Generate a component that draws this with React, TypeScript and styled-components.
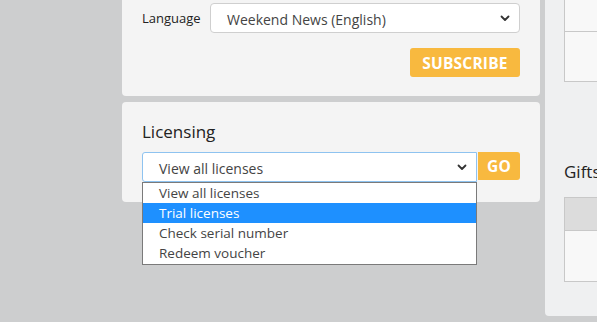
import React from "react";
import styled, { createGlobalStyle } from "styled-components";

const GlobalStyle = createGlobalStyle`
  html, body {
    margin: 0;
    padding: 0;
    overflow: hidden;
    background: #cdcecf;
    font-family: "Open Sans", "Noto Sans", sans-serif;
    color: #333;
  }
`;

const languageOptions = ["Weekend News (English)"];
const licensingOptions = [
  "View all licenses",
  "Trial licenses",
  "Check serial number",
  "Redeem voucher",
];

function Chevron() {
  return (
    <svg width="10" height="7" viewBox="0 0 10 7">
      <path
        d="M1.5 1.5 L5 5 L8.5 1.5"
        fill="none"
        stroke="#333"
        strokeWidth="1.8"
        strokeLinecap="round"
        strokeLinejoin="round"
      />
    </svg>
  );
}

export default function App() {
  return (
    <>
      <GlobalStyle />
      <StyledPage>
        <StyledLeftColumn>
          <StyledCard $top>
            <StyledLanguageRow>
              <StyledLabel>Language</StyledLabel>
              <StyledSelect $width={310}>
                <span>{languageOptions[0]}</span>
                <Chevron />
              </StyledSelect>
            </StyledLanguageRow>
            <StyledActions>
              <StyledButton $width={110}>SUBSCRIBE</StyledButton>
            </StyledActions>
          </StyledCard>
          <StyledCard>
            <StyledHeading>Licensing</StyledHeading>
            <StyledLicenseRow>
              <StyledSelectWrap>
                <StyledSelect $width={335} $focused>
                  <span>{licensingOptions[0]}</span>
                  <Chevron />
                </StyledSelect>
                <StyledMenu>
                  {licensingOptions.map((o, i) => (
                    <StyledOption key={o} $active={i === 1}>
                      {o}
                    </StyledOption>
                  ))}
                </StyledMenu>
              </StyledSelectWrap>
              <StyledButton $width={42} $short>
                GO
              </StyledButton>
            </StyledLicenseRow>
          </StyledCard>
        </StyledLeftColumn>
        <StyledRightPanel>
          <StyledTable>
            <StyledRow $height={50} />
            <StyledRow $height={49} />
          </StyledTable>
          <StyledGiftsHeading>Gifts</StyledGiftsHeading>
          <StyledTable>
            <StyledRow $height={32} $header />
            <StyledRow $height={50} />
          </StyledTable>
        </StyledRightPanel>
      </StyledPage>
    </>
  );
}

const StyledPage = styled.div`
  display: flex;
  align-items: flex-start;
  gap: 5px;
  margin-top: -20px;
  padding-left: 122px;
`;

const StyledLeftColumn = styled.div`
  width: 418px;
  display: flex;
  flex-direction: column;
  gap: 6px;
`;

const StyledCard = styled.div<{ $top?: boolean }>`
  background: #f4f4f4;
  border-radius: 4px;
  padding: ${(p) => (p.$top ? "23px 20px 19px" : "18px 20px 20px")};
`;

const StyledLanguageRow = styled.div`
  display: flex;
  align-items: center;
  justify-content: space-between;
`;

const StyledLabel = styled.label`
  font-size: 13px;
  color: #222;
`;

const StyledSelect = styled.div<{ $width: number; $focused?: boolean }>`
  box-sizing: border-box;
  width: ${(p) => p.$width}px;
  height: 30px;
  display: flex;
  align-items: center;
  justify-content: space-between;
  padding: 0 9px 0 16px;
  background: #fff;
  border: 1px solid ${(p) => (p.$focused ? "#8ec3f0" : "#cfcfcf")};
  border-radius: ${(p) => (p.$focused ? "3px 0 0 3px" : "4px")};
  font-size: 14px;
  color: #444;
  span {
    padding-top: 2px;
  }
`;

const StyledActions = styled.div`
  display: flex;
  justify-content: flex-end;
  margin-top: 15px;
`;

const StyledButton = styled.button<{ $width: number; $short?: boolean }>`
  box-sizing: border-box;
  width: ${(p) => p.$width}px;
  height: ${(p) => (p.$short ? 28 : 29)}px;
  border: none;
  border-radius: ${(p) => (p.$short ? "0 3px 3px 0" : "3px")};
  background: #f8b93f;
  color: #fff;
  font-family: "Open Sans", sans-serif;
  font-weight: 700;
  font-size: 15.5px;
  letter-spacing: 0.2px;
  padding: 0;
`;

const StyledHeading = styled.h3`
  margin: 0 0 9px;
  font-size: 17px;
  font-weight: 400;
  line-height: 23px;
  color: #222;
`;

const StyledLicenseRow = styled.div`
  display: flex;
  align-items: flex-start;
  gap: 1px;
`;

const StyledSelectWrap = styled.div`
  position: relative;
`;

const StyledMenu = styled.div`
  position: absolute;
  top: 30px;
  left: 0;
  width: 335px;
  box-sizing: border-box;
  background: #fff;
  border: 1px solid #7a7a7a;
  padding: 0 0 1px;
  z-index: 2;
`;

const StyledOption = styled.div<{ $active?: boolean }>`
  height: 20px;
  line-height: 20px;
  padding-left: 16px;
  font-size: 13.5px;
  color: ${(p) => (p.$active ? "#fff" : "#444")};
  background: ${(p) => (p.$active ? "#1e90ff" : "transparent")};
`;

const StyledRightPanel = styled.div`
  width: 400px;
  flex-shrink: 0;
  background: #eff0f1;
  border-radius: 4px;
  padding: 0 0 34px 19px;
`;

const StyledTable = styled.div`
  background: #f8f8f8;
  border: 1px solid #c8c8c8;
`;

const StyledRow = styled.div<{ $height: number; $header?: boolean }>`
  height: ${(p) => p.$height}px;
  background: ${(p) => (p.$header ? "#dcdcdc" : "#f8f8f8")};
  & + & {
    border-top: 1px solid #c8c8c8;
  }
`;

const StyledGiftsHeading = styled.h3`
  margin: 79px 0 14px;
  font-size: 17px;
  font-weight: 400;
  line-height: 22px;
  color: #222;
`;
